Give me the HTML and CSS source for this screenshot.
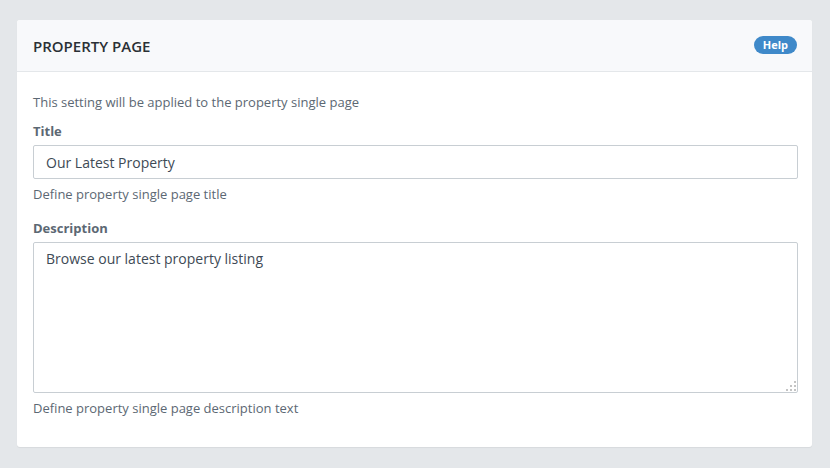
FILE: index.html
```html
<!DOCTYPE html>
<html>
<head>
<meta charset="utf-8">
<link rel="stylesheet" href="styles.css">
</head>
<body>
<div class="card">
  <div class="card-header">
    <h2 class="card-title">PROPERTY PAGE</h2>
    <span class="badge">Help</span>
  </div>
  <div class="card-body">
    <p class="intro">This setting will be applied to the property single page</p>
    <div class="group">
      <label class="label">Title</label>
      <input class="input" type="text" value="Our Latest Property">
      <div class="hint">Define property single page title</div>
    </div>
    <div class="group">
      <label class="label">Description</label>
      <div class="textarea-wrap">
        <textarea class="textarea">Browse our latest property listing</textarea>
        <svg class="grip" width="12" height="12" viewBox="0 0 12 12">
          <rect x="9" y="1" width="2" height="2"/>
          <rect x="5" y="5" width="2" height="2"/>
          <rect x="9" y="5" width="2" height="2"/>
          <rect x="1" y="9" width="2" height="2"/>
          <rect x="5" y="9" width="2" height="2"/>
          <rect x="9" y="9" width="2" height="2"/>
        </svg>
      </div>
      <div class="hint">Define property single page description text</div>
    </div>
  </div>
</div>
</body>
</html>
```
FILE: styles.css
```css
* { box-sizing: border-box; }
html, body { margin: 0; }
body {
  background: #e4e7ea;
  padding: 20px 18px 21px 17px;
  font-family: "Open Sans", "Liberation Sans", sans-serif;
  font-size: 13px;
  color: #23282c;
}
.card {
  background: #fff;
  border-radius: 3px;
  box-shadow: 0 1px 1px rgba(0,0,0,0.06);
}
.card-header {
  height: 52px;
  background: #f8f9fb;
  border-bottom: 1px solid #e4e7ea;
  border-radius: 3px 3px 0 0;
  display: flex;
  align-items: center;
  justify-content: space-between;
  padding: 0 15px 0 16px;
}
.card-title {
  margin: 0;
  font-size: 15px;
  font-weight: 600;
  color: #2a3035;
}
.badge {
  background: #3f89c9;
  color: #fff;
  font-weight: 700;
  font-size: 11px;
  height: 18px;
  line-height: 18px;
  padding: 0 9px;
  border-radius: 9px;
  margin-top: -2px;
}
.card-body {
  padding: 20px 14px 29px 16px;
}
.intro {
  margin: 0 0 9px;
  line-height: 20px;
  color: #5c6873;
}
.group + .group { margin-top: 14px; }
.label {
  display: block;
  font-weight: 700;
  line-height: 20px;
  color: #5c6873;
  margin-bottom: 4px;
}
.input, .textarea {
  display: block;
  width: 100%;
  border: 1px solid #c8ced3;
  border-radius: 2px;
  font-family: "Open Sans", "Liberation Sans", sans-serif;
  font-size: 14px;
  color: #3e4a55;
  padding: 0 12px;
  background: #fff;
  outline: none;
}
.input { height: 34px; }
.textarea-wrap { position: relative; }
.textarea {
  height: 151px;
  padding: 6px 12px;
  line-height: 20px;
  resize: none;
}
.grip {
  position: absolute;
  right: 1px;
  bottom: 1px;
  fill: #c4c4c4;
}
.hint {
  margin-top: 5px;
  line-height: 20px;
  color: #5c6873;
}
```
